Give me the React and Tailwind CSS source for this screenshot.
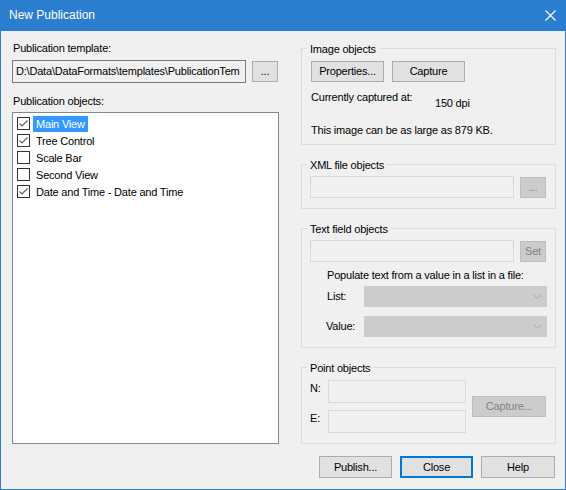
import React from "react";

const FONT = { fontFamily: '"Liberation Sans", Arial, sans-serif' };

const ITEMS = [
    { label: "Main View", checked: true, selected: true },
    { label: "Tree Control", checked: true },
    { label: "Scale Bar", checked: false },
    { label: "Second View", checked: false },
    { label: "Date and Time - Date and Time", checked: true },
];

function Button({ children, className = "", disabled, focused }) {
    const base = disabled
        ? "bg-[#cccccc] border border-[#bfbfbf] text-[#838383]"
        : focused
        ? "bg-[#e1e1e1] border-2 border-[#0078d7] text-black"
        : "bg-[#e1e1e1] border border-[#adadad] text-black";
    return (
        <div className={`flex items-center justify-center shrink-0 ${base} ${className}`}>
            {children}
        </div>
    );
}

function Field({ className = "", children, dark }) {
    return (
        <div
            className={`bg-[#f0f0f0] border ${dark ? "border-[#7a7a7a]" : "border-[#d9d9d9]"} overflow-hidden whitespace-nowrap flex items-center shrink-0 ${className}`}
        >
            {children}
        </div>
    );
}

function Select({ className = "" }) {
    return (
        <div className={`bg-[#cccccc] flex items-center justify-end pr-[5px] shrink-0 ${className}`}>
            <svg width="9" height="5" viewBox="0 0 9 5">
                <polyline points="0.5,0.5 4.5,4.5 8.5,0.5" fill="none" stroke="#a6a6a6" strokeWidth="1" />
            </svg>
        </div>
    );
}

function Group({ title, className = "", bodyClass = "", children }) {
    return (
        <fieldset className={`border border-[#dcdcdc] ${className}`}>
            <legend className="ml-[5px] px-[3px] leading-[15px] translate-y-[1px]">{title}</legend>
            <div className={bodyClass}>{children}</div>
        </fieldset>
    );
}

function CheckBox({ checked }) {
    return (
        <div className="w-[13px] h-[13px] border border-[#333333] bg-white shrink-0 flex items-center justify-center">
            {checked && (
                <svg width="11" height="11" viewBox="0 0 11 11">
                    <polyline points="1.5,5.5 4,8 9.5,2.5" fill="none" stroke="#606060" strokeWidth="1.2" />
                </svg>
            )}
        </div>
    );
}

export default function App() {
    return (
        <div
            className="w-[566px] h-[490px] flex flex-col bg-[#f0f0f0] border-x border-b border-[#2b7dcf] text-[11px] leading-[15px] tracking-[-0.2px] text-black"
            style={FONT}
        >
            {/* title bar */}
            <div className="h-[31px] -mx-px bg-[#2b7dcf] flex items-center justify-between pl-[9px] pr-[10px] shrink-0">
                <span className="text-white text-[12px] tracking-normal">New Publication</span>
                <svg width="11" height="11" viewBox="0 0 11 11">
                    <path d="M0.5 0.5 L10.5 10.5 M10.5 0.5 L0.5 10.5" stroke="#ffffff" strokeWidth="1.1" />
                </svg>
            </div>

            <div className="flex pl-[11px] pt-[10px]">
                {/* left column */}
                <div className="w-[267px] flex flex-col">
                    <div className="pl-px">Publication template:</div>
                    <div className="flex items-center mt-[4px]">
                        <Field dark className="w-[234px] h-[23px] pl-[3px]">
                            D:\Data\DataFormats\templates\PublicationTem
                        </Field>
                        <Button className="w-[26px] h-[21px] ml-[6px]">...</Button>
                    </div>
                    <div className="pl-px mt-[11px]">Publication objects:</div>
                    <div className="mt-[3px] h-[332px] bg-white border border-[#828790] pl-[4px] pt-[2px]">
                        {ITEMS.map((it) => (
                            <div key={it.label} className="h-[17px] flex items-center">
                                <CheckBox checked={it.checked} />
                                <span
                                    className={`ml-[3px] px-[3px] leading-[16px] ${
                                        it.selected ? "bg-[#3399ff] text-white" : ""
                                    }`}
                                >
                                    {it.label}
                                </span>
                            </div>
                        ))}
                    </div>
                </div>

                {/* right column */}
                <div className="w-[255px] ml-[22px] flex flex-col">
                    <Group title="Image objects" bodyClass="pl-[9px] pb-[6px]">
                        <div className="flex mt-[5px]">
                            <Button className="w-[73px] h-[21px]">Properties...</Button>
                            <Button className="w-[73px] h-[21px] ml-[8px]">Capture</Button>
                        </div>
                        <div className="flex items-start mt-[8px]">
                            <span className="w-[124px]">Currently captured at:</span>
                            <span className="mt-[6px]">150 dpi</span>
                        </div>
                        <div className="mt-[12px]">This image can be as large as 879 KB.</div>
                    </Group>

                    <Group title="XML file objects" className="mt-[12px]" bodyClass="pl-[8px] pb-[10px]">
                        <div className="flex items-center mt-[4px]">
                            <Field className="w-[204px] h-[22px]" />
                            <Button disabled className="w-[26px] h-[21px] ml-[6px]">...</Button>
                        </div>
                    </Group>

                    <Group title="Text field objects" className="mt-[12px]" bodyClass="pl-[8px] pb-[10px]">
                        <div className="flex items-center mt-[4px]">
                            <Field className="w-[204px] h-[22px]" />
                            <Button disabled className="w-[26px] h-[21px] ml-[6px]">Set</Button>
                        </div>
                        <div className="ml-[17px] mt-[6px]">Populate text from a value in a list in a file:</div>
                        <div className="flex items-center ml-[17px] mt-[3px]">
                            <span className="w-[37px]">List:</span>
                            <Select className="w-[183px] h-[21px]" />
                        </div>
                        <div className="flex items-center ml-[16px] mt-[9px]">
                            <span className="w-[38px]">Value:</span>
                            <Select className="w-[183px] h-[21px]" />
                        </div>
                    </Group>

                    <Group title="Point objects" className="mt-[12px]" bodyClass="pl-[8px] pb-[10px]">
                        <div className="flex items-center mt-[5px]">
                            <div className="flex flex-col">
                                <div className="flex items-start">
                                    <span className="w-[18px] mt-[1px]">N:</span>
                                    <Field className="w-[138px] h-[23px]" />
                                </div>
                                <div className="flex items-start mt-[7px]">
                                    <span className="w-[18px] mt-[1px]">E:</span>
                                    <Field className="w-[138px] h-[23px]" />
                                </div>
                            </div>
                            <Button disabled className="w-[74px] h-[21px] ml-[6px]">Capture...</Button>
                        </div>
                    </Group>
                </div>
            </div>

            {/* dialog buttons */}
            <div className="flex justify-end gap-[8px] pr-[10px] mt-[12px]">
                <Button className="w-[73px] h-[22px]">Publish...</Button>
                <Button focused className="w-[73px] h-[22px]">Close</Button>
                <Button className="w-[74px] h-[22px]">Help</Button>
            </div>
        </div>
    );
}
